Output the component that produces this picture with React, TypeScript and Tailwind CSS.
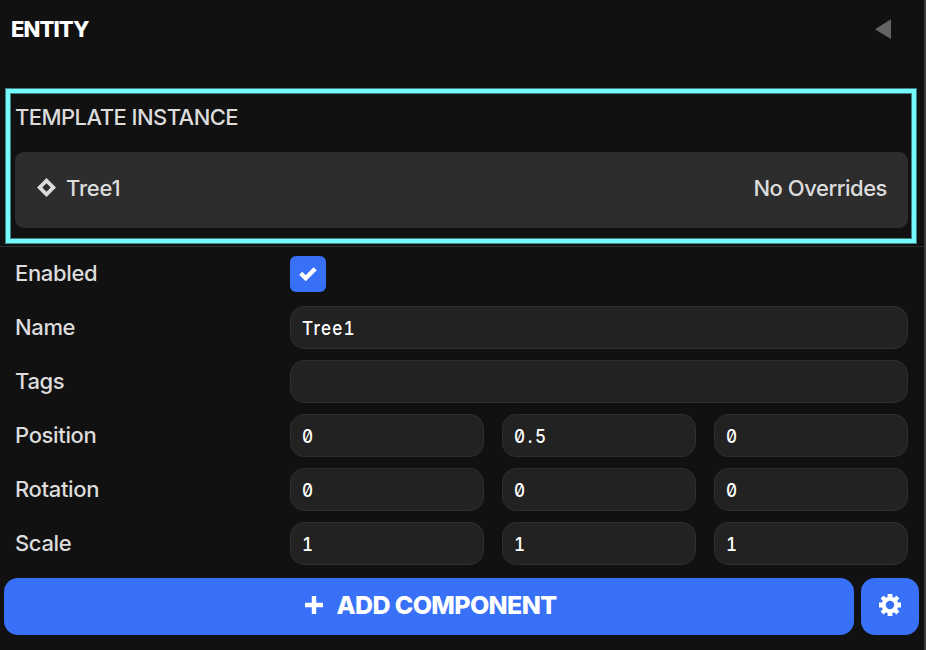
import type { ReactNode } from 'react';

function Field({ value, className = '' }: { value: string; className?: string }) {
  return (
    <div
      className={`flex h-[43px] min-w-0 flex-1 items-center rounded-[14px] border border-[#2e2e2e] bg-[#222222] pt-[2px] pl-[11px] text-white ${className}`}
    >
      <span className="origin-left scale-x-90 text-[19px] leading-none font-medium [font-feature-settings:'zero','tnum']">
        {value}
      </span>
    </div>
  );
}

function Row({ label, children }: { label: string; children: ReactNode }) {
  return (
    <div className="flex h-[54px] items-center pr-4 pl-[15px]">
      <span className="w-[275px] shrink-0 pb-[2px] text-[22px] leading-none font-[450] tracking-[-0.35px]">{label}</span>
      <div className="flex flex-1 gap-[18px] pb-px">{children}</div>
    </div>
  );
}

const vectors = [
  { label: 'Position', values: ['0', '0.5', '0'] },
  { label: 'Rotation', values: ['0', '0', '0'] },
  { label: 'Scale', values: ['1', '1', '1'] },
];

export default function App() {
  return (
    <div className="h-[650px] w-[926px] overflow-hidden border-r-2 border-[#3b3b3b] bg-[#111111] font-[Inter,sans-serif] text-[#dcdcdc]">
      <header className="flex h-[88px] items-start justify-between pt-[19px] pr-[33px] pl-[11px]">
        <h1 className="-mt-px text-[22px] leading-[22px] font-extrabold tracking-[-0.9px] text-white">ENTITY</h1>
        <svg width="16" height="20" viewBox="0 0 16 20" fill="#636565">
          <path d="M16 0.3V20L0 10.2Z" />
        </svg>
      </header>

      <section className="ml-[5px] h-[156px] w-[912px] border border-[#418486]">
        <div className="h-full border-4 border-[#75fbfd]">
          <div className="h-full border border-[#418486] pt-3 pr-[3px] pl-1">
            <h2 className="text-[22px] leading-[22px] font-[450] tracking-[-0.55px]">TEMPLATE INSTANCE</h2>
            <div className="mt-6 flex h-[76px] items-center justify-between rounded-[9px] bg-[#2d2d2d] pr-[21px] pb-[5px] pl-[22px] text-[22px] leading-none font-[450] tracking-[-0.48px]">
              <div className="flex items-center">
                <svg className="mr-[9px]" width="20" height="20" viewBox="0 0 20 20" fill="#dcdcdc">
                  <path fillRule="evenodd" d="M9.5 0L19 9.5L9.5 19L0 9.5ZM9.5 5.3L5.3 9.5L9.5 13.7L13.7 9.5Z" />
                </svg>
                <span className="tracking-[-0.2px]">Tree1</span>
              </div>
              <span>No Overrides</span>
            </div>
          </div>
        </div>
      </section>

      <main className="mt-[2px] border-t border-[#2d2f2f]">
        <Row label="Enabled">
          <div className="mt-px flex h-9 w-9 items-center justify-center rounded-md bg-[#3871f7]">
            <svg width="18" height="14" viewBox="0 0 18 14" fill="none" stroke="white" strokeWidth="4.4">
              <path d="M1.7 6.3L6.7 11.2L16.2 1.8" />
            </svg>
          </div>
        </Row>
        <Row label="Name">
          <Field value="Tree1" className="tracking-[1.4px]" />
        </Row>
        <Row label="Tags">
          <Field value="" />
        </Row>
        {vectors.map((vector) => (
          <Row key={vector.label} label={vector.label}>
            {vector.values.map((value, i) => (
              <Field key={i} value={value} className="tracking-[2.9px]" />
            ))}
          </Row>
        ))}
      </main>

      <footer className="mt-[7px] flex h-[57px] gap-[7px] pr-[5px] pl-1 text-white">
        <button className="flex flex-1 items-center justify-center rounded-[14px] bg-[#3871f7] pb-[2px] pl-[3px] text-[25px] leading-none font-extrabold tracking-[-0.65px]">
          <svg className="-mt-[2px] mr-[14px]" width="18" height="18" viewBox="0 0 18 18" fill="white">
            <path d="M6.8 0H11.2V6.8H18V11.2H11.2V18H6.8V11.2H0V6.8H6.8Z" />
          </svg>
          ADD COMPONENT
        </button>
        <button className="flex w-[58px] items-center justify-center rounded-[14px] bg-[#3871f7] pb-[3px]">
          <svg width="22" height="22" viewBox="-11 -11 22 22" fill="white">
            <path
              fillRule="evenodd"
              d="M-2.4-11H2.4V-8L4.2-7.2L6.4-9.4L9.4-6.4L7.2-4.2L8-2.4H11V2.4H8L7.2 4.2L9.4 6.4L6.4 9.4L4.2 7.2L2.4 8V11H-2.4V8L-4.2 7.2L-6.4 9.4L-9.4 6.4L-7.2 4.2L-8 2.4H-11V-2.4H-8L-7.2-4.2L-9.4-6.4L-6.4-9.4L-4.2-7.2L-2.4-8ZM0-4.2A4.2 4.2 0 1 0 0 4.2A4.2 4.2 0 1 0 0-4.2Z"
            />
          </svg>
        </button>
      </footer>
    </div>
  );
}
